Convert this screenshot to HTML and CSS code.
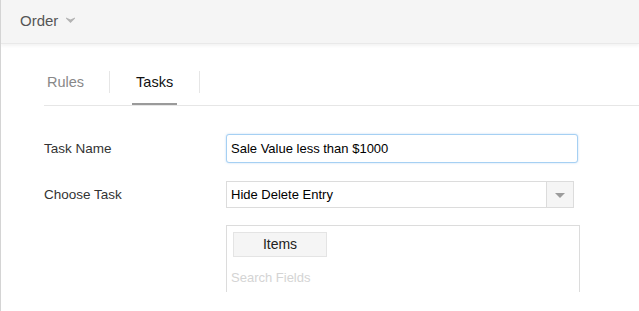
FILE: index.html
```html
<!DOCTYPE html>
<html lang="en">
<head>
    <meta charset="UTF-8">
    <title>Order - Tasks</title>
    <link rel="stylesheet" href="styles.css">
</head>
<body>
    <div class="page">
        <div class="topbar">
            <span class="module-name">Order</span>
            <svg class="caret" width="9" height="6" viewBox="0 0 9 6"><path d="M0 0.5 L4.5 2.6 L9 0.5 L9 1.6 L4.5 6 L0 1.6 Z" fill="#b3b3b3"/></svg>
        </div>

        <div class="content">
            <div class="tabs">
                <div class="tab">Rules</div>
                <div class="tab-sep"></div>
                <div class="tab active">Tasks</div>
                <div class="tab-sep"></div>
            </div>

            <div class="form">
                <div class="form-row">
                    <label class="form-label" for="taskName">Task Name</label>
                    <input class="text-input" id="taskName" type="text" value="Sale Value less than $1000">
                </div>
                <div class="form-row">
                    <label class="form-label">Choose Task</label>
                    <div class="select">
                        <span class="select-value">Hide Delete Entry</span>
                        <span class="select-arrow"></span>
                    </div>
                </div>
                <div class="form-row top">
                    <div class="form-label"></div>
                    <div class="field-box">
                        <div class="field-btn">Items</div>
                        <div class="field-search">Search Fields</div>
                    </div>
                </div>
            </div>
        </div>
    </div>
</body>
</html>
```

FILE: styles.css
```css
body {
    margin: 0;
    font-family: "Liberation Sans", Arial, sans-serif;
    color: #333;
    background: #fff;
}
.page {
    min-height: 311px;
    border-left: 1px solid #d4d4d4;
    overflow: hidden;
}
.topbar {
    box-sizing: border-box;
    height: 44px;
    padding: 12px 0 0 19px;
    background: #f5f5f5;
    border-bottom: 1px solid #e9e9e9;
    box-shadow: 0 2px 3px rgba(0, 0, 0, 0.05);
    display: flex;
    align-items: flex-start;
}
.module-name {
    font-size: 15px;
    line-height: 17px;
    color: #555;
}
.caret {
    margin: 5px 0 0 8px;
}
.content {
    padding-left: 43px;
}
.tabs {
    display: flex;
    align-items: flex-start;
    padding-top: 27px;
    border-bottom: 1px solid #e6e6e6;
}
.tab {
    padding: 3px 3px 12px;
    font-size: 14.5px;
    line-height: 17px;
    color: #888;
    border-bottom: 2px solid transparent;
}
.tab.active {
    padding: 3px 4px 12px;
    color: #111;
    border-bottom-color: #9a9a9a;
}
.tab-sep {
    width: 1px;
    height: 22px;
    margin: 0 22px;
    background: #e6e6e6;
}
.form {
    padding-top: 28px;
}
.form-row {
    display: flex;
    align-items: center;
    margin-bottom: 18px;
}
.form-row.top {
    align-items: flex-start;
    margin-top: -1px;
}
.form-label {
    width: 182px;
    flex-shrink: 0;
    font-size: 13.5px;
    color: #333;
}
.text-input {
    box-sizing: border-box;
    width: 352px;
    height: 29px;
    margin: 0;
    padding: 0 4px;
    font-family: inherit;
    font-size: 13px;
    color: #000;
    border: 1px solid #a6d0f3;
    border-radius: 3px;
    box-shadow: 0 0 2px rgba(120, 180, 240, 0.5);
    outline: none;
}
.select {
    box-sizing: border-box;
    width: 348px;
    height: 27px;
    display: flex;
    border: 1px solid #dcdcdc;
}
.select-value {
    flex: 1;
    padding-left: 4px;
    font-size: 13px;
    line-height: 25px;
    color: #000;
}
.select-arrow {
    width: 26px;
    background: #f5f5f5;
    border-left: 1px solid #dcdcdc;
    display: flex;
    align-items: center;
    justify-content: center;
}
.select-arrow::after {
    content: "";
    border-left: 5px solid transparent;
    border-right: 5px solid transparent;
    border-top: 5px solid #9c9c9c;
    margin-top: 1px;
}
.field-box {
    box-sizing: border-box;
    width: 354px;
    height: 67px;
    padding: 6px 4px 0;
    border: 1px solid #dcdcdc;
    border-bottom: none;
}
.field-btn {
    box-sizing: border-box;
    width: 94px;
    height: 25px;
    margin-left: 2px;
    background: #f5f5f5;
    border: 1px solid #e4e4e4;
    font-size: 14px;
    line-height: 23px;
    text-align: center;
    color: #222;
}
.field-search {
    margin-top: 13px;
    font-size: 13px;
    color: #d4d4d4;
}
```
